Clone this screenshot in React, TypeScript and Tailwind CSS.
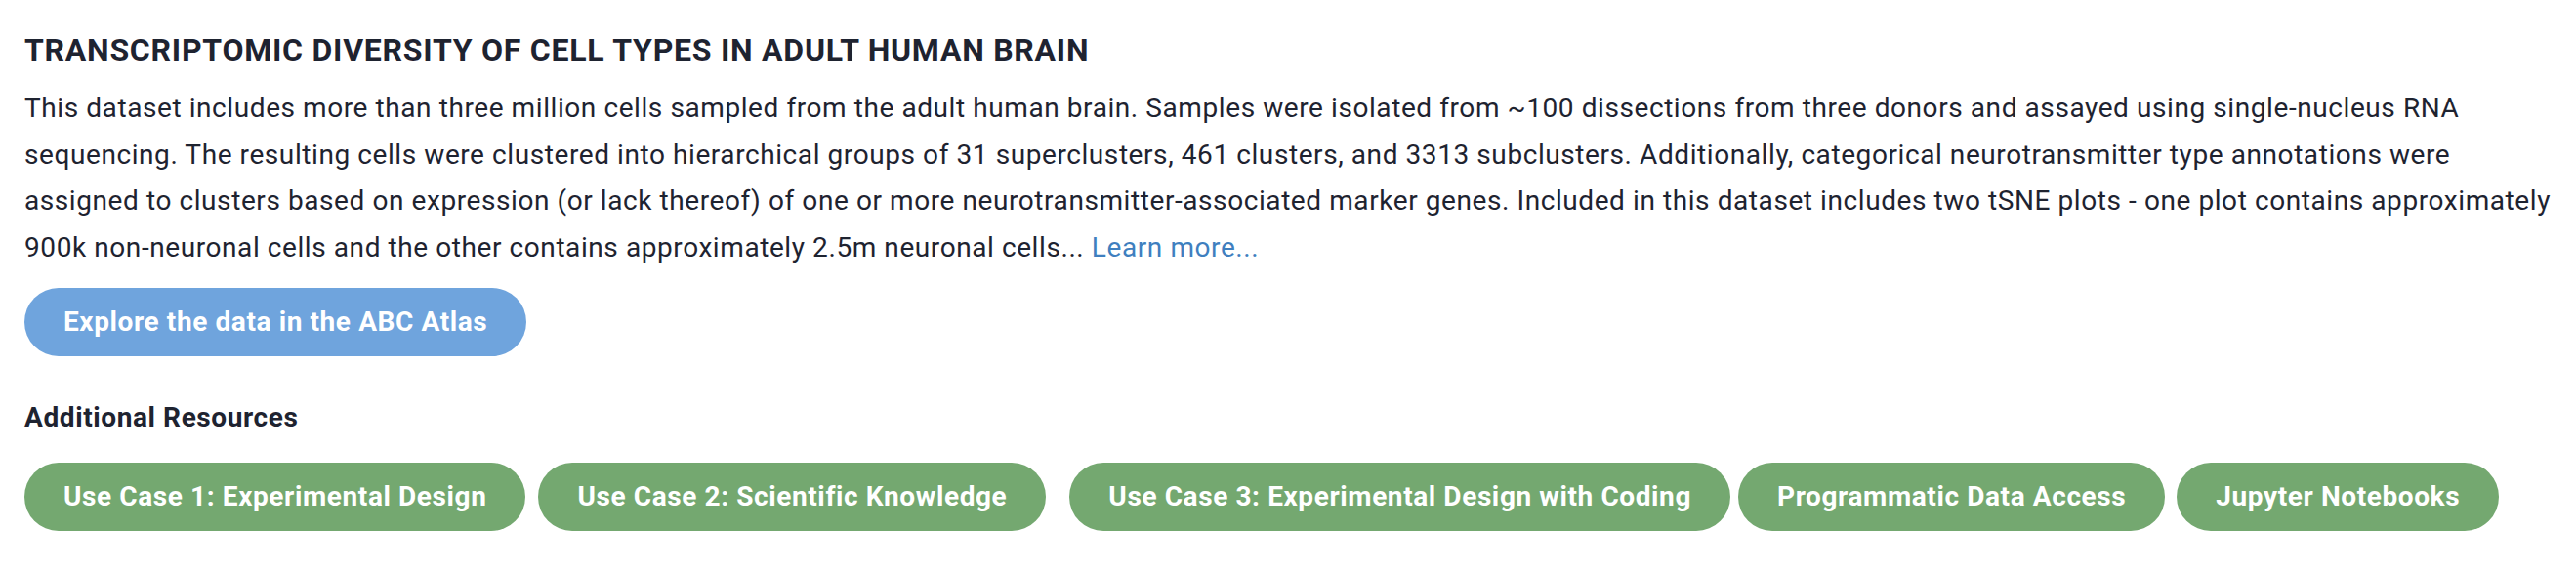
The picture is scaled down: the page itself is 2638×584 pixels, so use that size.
import React from 'react';

const resources = [
    { label: 'Use Case 1: Experimental Design', className: '' },
    { label: 'Use Case 2: Scientific Knowledge', className: 'ml-[13px]' },
    { label: 'Use Case 3: Experimental Design with Coding', className: 'ml-[24px]' },
    { label: 'Programmatic Data Access', className: 'ml-[8px]' },
    { label: 'Jupyter Notebooks', className: 'ml-[12px]' },
];

const App: React.FC = () => {
    return (
        <section className="w-full bg-white pt-[32px] pr-[10px] pb-[40px] pl-[25px] font-['Roboto',sans-serif] text-[#1e2330]">
            <h1 className="text-[32px] leading-[38px] font-bold tracking-[0.75px] uppercase">
                Transcriptomic Diversity of Cell Types in Adult Human Brain
            </h1>
            <p className="mt-[17px] text-[28px] leading-[47.6px] tracking-[0.58px]">
                This dataset includes more than three million cells sampled from the adult human brain. Samples were isolated from ~100 dissections from three donors and assayed using single-nucleus RNA sequencing. The resulting cells were clustered into hierarchical groups of 31 superclusters, 461 clusters, and 3313 subclusters. Additionally, categorical neurotransmitter type annotations were assigned to clusters based on expression (or lack thereof) of one or more neurotransmitter-associated marker genes. Included in this dataset includes two tSNE plots - one plot contains approximately 900k non-neuronal cells and the other contains approximately 2.5m neuronal cells...{' '}
                <a href="#" className="text-[#3f7fbf]">Learn more...</a>
            </p>

            <button className="mt-[18px] flex h-[70px] items-center rounded-full bg-[#6fa4dd] px-[40px] text-[28px] font-bold tracking-[0.6px] text-white">
                Explore the data in the ABC Atlas
            </button>

            <h2 className="mt-[46px] text-[28px] leading-[34px] font-bold tracking-[0.6px]">Additional Resources</h2>

            <div className="mt-[29px] flex">
                {resources.map((r) => (
                    <button
                        key={r.label}
                        className={`flex h-[70px] shrink-0 items-center rounded-full bg-[#74a870] px-[40px] text-[28px] font-bold tracking-[0.6px] whitespace-nowrap text-white ${r.className}`}
                    >
                        {r.label}
                    </button>
                ))}
            </div>
        </section>
    );
};

export default App;
